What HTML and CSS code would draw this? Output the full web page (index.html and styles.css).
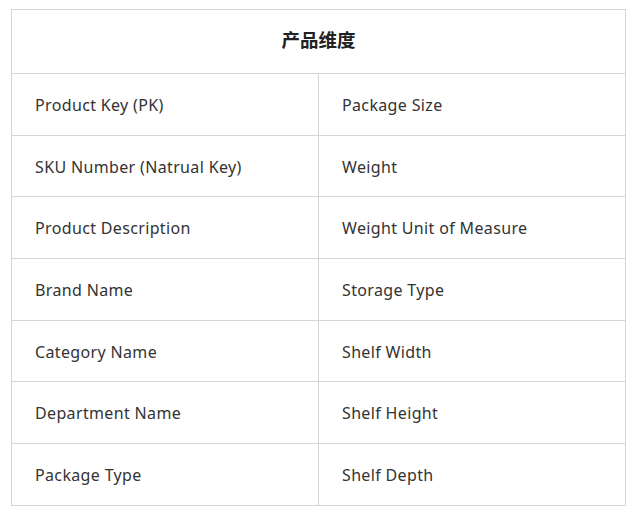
FILE: index.html
```html
<!DOCTYPE html>
<html>
<head>
<meta charset="utf-8">
<link rel="stylesheet" href="styles.css">
</head>
<body>
<table class="dim">
  <thead>
    <tr><th colspan="2">产品维度</th></tr>
  </thead>
  <tbody>
    <tr><td>Product Key (PK)</td><td>Package Size</td></tr>
    <tr><td>SKU Number (Natrual Key)</td><td>Weight</td></tr>
    <tr><td>Product Description</td><td>Weight Unit of Measure</td></tr>
    <tr><td>Brand Name</td><td>Storage Type</td></tr>
    <tr><td>Category Name</td><td>Shelf Width</td></tr>
    <tr><td>Department Name</td><td>Shelf Height</td></tr>
    <tr><td>Package Type</td><td>Shelf Depth</td></tr>
  </tbody>
</table>
</body>
</html>
```

FILE: styles.css
```css
html, body {
  margin: 0;
  background: #ffffff;
}
body {
  padding: 9px 0 0 11px;
  font-family: "Noto Sans", "Noto Sans CJK SC", sans-serif;
  color: #333333;
}
.dim {
  border-collapse: collapse;
  width: 615px;
  table-layout: fixed;
}
.dim th, .dim td {
  border: 1px solid #d3d5da;
}
.dim th {
  height: 64px;
  font-size: 18.5px;
  font-weight: bold;
  text-align: center;
  color: #222222;
  padding: 0 0 5px 0;
  box-sizing: border-box;
}
.dim td {
  height: 61.7px;
  padding: 1px 0 0 23px;
  font-size: 16px;
  letter-spacing: 0.35px;
  text-align: left;
  box-sizing: border-box;
}
```
